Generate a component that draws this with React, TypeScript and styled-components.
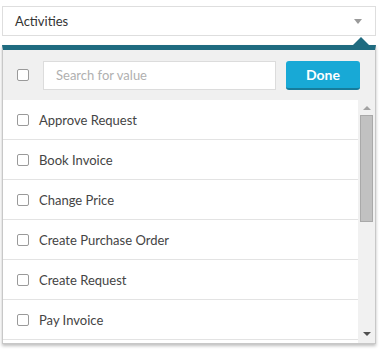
import styled, { createGlobalStyle } from "styled-components";

const GlobalStyle = createGlobalStyle`
  body {
    margin: 0;
    background: #ffffff;
    font-family: "Lato", "Open Sans", sans-serif;
  }
`;

// only the rows that show in the list; the rest sit below the scroll
const items = [
  "Approve Request",
  "Book Invoice",
  "Change Price",
  "Create Purchase Order",
  "Create Request",
  "Pay Invoice",
];

function App() {
  return (
    <Page>
      <GlobalStyle />
      <SelectBox>
        <SelectLabel>Activities</SelectLabel>
        <Caret />
      </SelectBox>
      <Popup>
        <Pointer />
        <Header>
          <CheckBox />
          <SearchInput placeholder="Search for value" />
          <DoneButton>Done</DoneButton>
        </Header>
        <ListArea>
          <List>
            {items.map((item) => (
              <Row key={item}>
                <CheckBox />
                <RowLabel>{item}</RowLabel>
              </Row>
            ))}
          </List>
          <ScrollBar>
            <ScrollArrow $up />
            <Thumb />
            <ScrollArrow />
          </ScrollBar>
        </ListArea>
      </Popup>
    </Page>
  );
}

export default App;

const Page = styled.div`
  width: 388px;
  height: 355px;
  padding: 6px 0 0 2px;
  box-sizing: border-box;
  overflow: hidden;
`;

const SelectBox = styled.div`
  width: 374px;
  height: 30px;
  border: 1px solid #dedede;
  box-sizing: border-box;
  display: flex;
  align-items: center;
  justify-content: space-between;
  padding: 0 13px 0 12px;
`;

const SelectLabel = styled.span`
  font-size: 13px;
  color: #333;
`;

const Caret = styled.span`
  width: 0;
  height: 0;
  border-left: 4px solid transparent;
  border-right: 4px solid transparent;
  border-top: 5px solid #9a9a9a;
`;

const Popup = styled.div`
  position: relative;
  margin-top: 9px;
  width: 374px;
  border-top: 5px solid #1f6b80;
  border-left: 1px solid #c8c8c8;
  border-right: 1px solid #c8c8c8;
  border-bottom: 1px solid #c8c8c8;
  box-sizing: border-box;
  box-shadow: 0 2px 3px rgba(0, 0, 0, 0.25);
`;

const Pointer = styled.span`
  position: absolute;
  top: -13px;
  right: 6px;
  width: 0;
  height: 0;
  border-left: 8px solid transparent;
  border-right: 8px solid transparent;
  border-bottom: 8px solid #1f6b80;
`;

const Header = styled.div`
  height: 50px;
  background: #f0f0f0;
  display: flex;
  align-items: center;
  padding: 0 14px;
`;

const CheckBox = styled.span`
  width: 12px;
  height: 12px;
  border: 1px solid #9a9a9a;
  border-radius: 2px;
  box-sizing: border-box;
  background: #fff;
  flex-shrink: 0;
`;

const SearchInput = styled.input`
  margin-left: 14px;
  width: 233px;
  height: 29px;
  border: 1px solid #dcdcdc;
  box-sizing: border-box;
  padding: 0 12px;
  font-family: "Lato", "Open Sans", sans-serif;
  font-size: 13px;
  outline: none;
  &::placeholder {
    color: #b0b0b0;
  }
`;

const DoneButton = styled.button`
  margin-left: 10px;
  width: 74px;
  height: 29px;
  border: none;
  border-bottom: 2px solid #167c9c;
  border-radius: 3px;
  background: #18a9d6;
  color: #fff;
  font-family: "Lato", "Open Sans", sans-serif;
  font-size: 14px;
  font-weight: 700;
  padding: 0;
`;

const ListArea = styled.div`
  display: flex;
  height: 243px;
`;

const List = styled.div`
  flex: 1;
  overflow: hidden;
  background: #fff;
`;

const Row = styled.div`
  height: 40px;
  border-bottom: 1px solid #e3e3e3;
  box-sizing: border-box;
  display: flex;
  align-items: center;
  padding-left: 14px;
`;

const RowLabel = styled.span`
  margin-left: 10px;
  font-size: 13px;
  color: #444;
`;

const ScrollBar = styled.div`
  width: 17px;
  background: #f1f1f1;
  display: flex;
  flex-direction: column;
  align-items: center;
  padding-top: 6px;
  box-sizing: border-box;
`;

const ScrollArrow = styled.span<{ $up?: boolean }>`
  width: 0;
  height: 0;
  border-left: 4px solid transparent;
  border-right: 4px solid transparent;
  ${(p) =>
    p.$up
      ? "border-bottom: 4px solid #a3a3a3;"
      : "border-top: 4px solid #505050; margin-top: auto; margin-bottom: 7px;"}
`;

const Thumb = styled.span`
  margin-top: 5px;
  width: 13px;
  height: 107px;
  background: #c1c1c1;
  border: 1px solid #a9a9a9;
  box-sizing: border-box;
`;
